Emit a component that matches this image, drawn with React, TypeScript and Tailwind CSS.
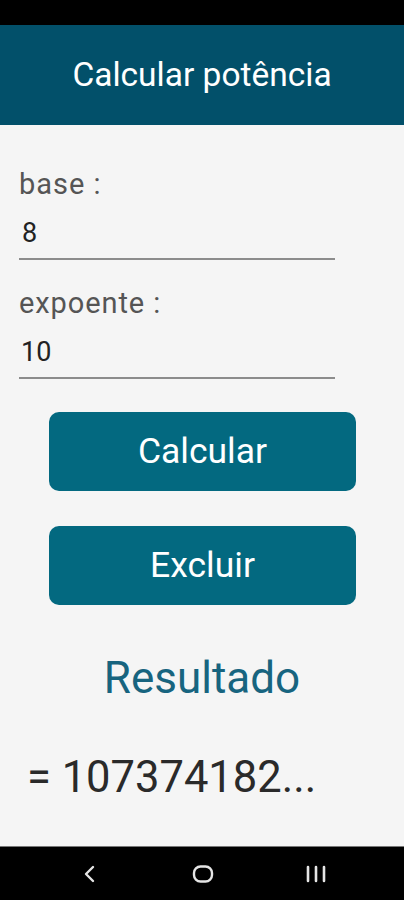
import React from 'react';

export default function App() {
    return (
        <div className="w-[404px] h-[900px] flex flex-col bg-[#f5f5f5] font-['Roboto',sans-serif] overflow-hidden">
            {/* Status bar */}
            <div className="h-[25px] bg-black shrink-0" />

            {/* Toolbar */}
            <header className="h-[100px] bg-[#02506a] flex items-center justify-center shrink-0">
                <h1 className="text-white text-[33.5px] leading-none">Calcular potência</h1>
            </header>

            {/* Form */}
            <main className="flex-1 flex flex-col">
                <div className="pl-[19px] pt-[42px]">
                    <p className="text-[29px] leading-[34px] tracking-[1px] text-[#555]">base :</p>
                    <div className="w-[316px] border-b-2 border-[#8c8c8c] pl-[3px] pt-[16px] pb-[9px]">
                        <span className="block text-[27px] leading-[32px] text-[#222]">8</span>
                    </div>
                    <p className="mt-[26px] text-[29px] leading-[34px] tracking-[0.9px] text-[#555]">expoente :</p>
                    <div className="w-[316px] border-b-2 border-[#8c8c8c] pl-[2px] pt-[16px] pb-[9px]">
                        <span className="block text-[27px] leading-[32px] text-[#222]">10</span>
                    </div>
                </div>

                <div className="flex flex-col items-center gap-[35px] mt-[33px] pl-[1px]">
                    <button className="w-[307px] h-[79px] rounded-[10px] bg-[#036980] text-white text-[35.5px]">
                        Calcular
                    </button>
                    <button className="w-[307px] h-[79px] rounded-[10px] bg-[#036980] text-white text-[35.5px]">
                        Excluir
                    </button>
                </div>

                <p className="mt-[48px] text-center text-[44px] leading-[50px] text-[#17647f]">Resultado</p>

                <p className="mt-[50px] pl-[27px] text-[43.5px] leading-[50px] text-[#2a2a2a]">= 107374182...</p>
            </main>

            {/* Navigation bar */}
            <nav className="h-[54px] bg-black flex items-center pl-[70px] gap-[73px] shrink-0 border-t border-[#777]">
                <div className="w-[40px] flex justify-center">
                    <svg width="14" height="18" viewBox="0 0 14 18" fill="none">
                        <path d="M10 2 L3 9 L10 16" stroke="#e5e5e5" strokeWidth="2.4" strokeLinecap="round" strokeLinejoin="round" />
                    </svg>
                </div>
                <div className="w-[40px] flex justify-center">
                    <svg width="22" height="18" viewBox="0 0 22 18" fill="none">
                        <rect x="2" y="1.5" width="18" height="15" rx="6.5" stroke="#e5e5e5" strokeWidth="2.4" />
                    </svg>
                </div>
                <div className="w-[40px] flex justify-center">
                    <svg width="22" height="18" viewBox="0 0 22 18" fill="none">
                        <path d="M3 2 V16 M11 2 V16 M19 2 V16" stroke="#e5e5e5" strokeWidth="2.6" strokeLinecap="round" />
                    </svg>
                </div>
            </nav>
        </div>
    );
}
